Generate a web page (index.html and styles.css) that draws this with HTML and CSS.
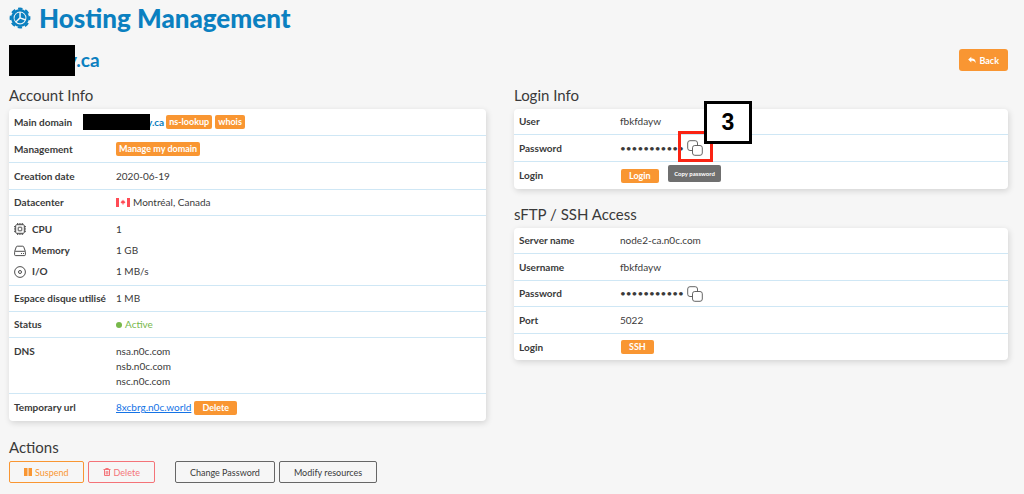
FILE: index.html
```html
<!DOCTYPE html>
<html lang="en">
<head>
<meta charset="utf-8">
<title>Hosting Management</title>
<link rel="stylesheet" href="styles.css">
</head>
<body>
<svg class="defs" aria-hidden="true">
  <symbol id="copy" viewBox="0 0 16 16"><g fill="none" stroke="currentColor" stroke-width=".9"><path d="M5.500 10.500H3A2.300 2.300 0 0 1 .7 8.200V3A2.300 2.300 0 0 1 3 .7h5.200A2.300 2.300 0 0 1 10.500 3v2.500"/><rect x="5.500" y="5.500" width="9.800" height="9.800" rx="2.300"/></g></symbol>
</svg>
<main class="page">
  <header class="title">
    <svg class="gear" viewBox="0 0 22 22" aria-hidden="true">
      <circle cx="11" cy="11" r="9.400" fill="none" stroke="currentColor" stroke-width="2" stroke-dasharray="4.400 2.983" stroke-dashoffset="2.200"/>
      <circle cx="11" cy="11" r="7.700" fill="none" stroke="currentColor" stroke-width="2.600"/>
      <path fill="currentColor" d="M10.300 5.600v5L6.700 14.200A5.300 5.300 0 0 1 10.300 5.600zM11.800 5.600a5.300 5.300 0 0 1 4.500 6.400l-4.500-1.500zM11.300 11.800l4.500 1.600a5.300 5.300 0 0 1-8.100 1.700z"/>
    </svg>
    <h1>Hosting Management</h1>
  </header>
  <div class="domain-bar">
    <h2 class="domain"><span class="mask mask-large"></span><span class="masked">y.ca</span></h2>
    <button class="back" type="button"><svg class="back-icon" viewBox="0 0 8 8" aria-hidden="true"><path fill="currentColor" d="M3.300.8v1.600c3 0 4.400 1.200 4.400 4.800C6.800 5.300 5.700 4.800 3.300 4.800v1.600L.2 3.600z"/></svg>Back</button>
  </div>
  <div class="columns">
    <section class="account">
      <h3>Account Info</h3>
      <table class="card">
        <tr class="tall"><th scope="row">Main domain</th><td><span class="line shifted"><span class="mask mask-small"></span><a class="masked" href="#">y.ca</a><button class="tag" type="button">ns-lookup</button><button class="tag" type="button">whois</button></span></td></tr>
        <tr class="tall"><th scope="row">Management</th><td><span class="line"><button class="tag" type="button">Manage my domain</button></span></td></tr>
        <tr class="tall"><th scope="row">Creation date</th><td>2020-06-19</td></tr>
        <tr><th scope="row">Datacenter</th><td><span class="line"><svg class="flag" viewBox="0 0 14 9" aria-hidden="true"><path fill="#fff" d="M0 0h14v9H0z"/><path fill="#ff4b55" d="M0 0h3v9H0zM11 0h3v9h-3zM7 1.500l.8 1.500.9-.3-.2 1.100 1.100.3-1.500 1.400H7.300v1.500h-.6V5.500H5.900L4.400 4.100l1.100-.3-.2-1.100.9.300z"/></svg>Montréal, Canada</span></td></tr>
        <tr class="res res-first"><th scope="row"><span class="label"><svg class="res-icon" viewBox="0 0 12 12" aria-hidden="true"><g fill="none" stroke="currentColor" stroke-width=".9"><rect x="1.700" y="1.700" width="8.600" height="8.600" rx="1"/><rect x="4.200" y="4.200" width="3.600" height="3.600" rx=".5"/><path d="M3.500 0v1.500M5.200 0v1.500M6.900 0v1.500M8.600 0v1.500M3.500 10.500V12M5.200 10.500V12M6.900 10.500V12M8.600 10.500V12M0 3.500h1.500M0 5.200h1.500M0 6.900h1.500M0 8.600h1.500M10.500 3.500H12M10.500 5.200H12M10.500 6.900H12M10.500 8.600H12" stroke-width=".8"/></g></svg>CPU</span></th><td>1</td></tr>
        <tr class="res"><th scope="row"><span class="label"><svg class="res-icon" viewBox="0 0 12 12" aria-hidden="true"><g fill="none" stroke="currentColor" stroke-width=".9"><path d="M.6 6.500 2.300 1.800q.3-.6.900-.6h5.600q.6 0 .9.600l1.700 4.700"/><rect x=".6" y="6.300" width="10.800" height="4.300" rx="1"/><path d="M7 8.500h1M9 8.500h1"/></g></svg>Memory</span></th><td>1 GB</td></tr>
        <tr class="res res-last"><th scope="row"><span class="label"><svg class="res-icon" viewBox="0 0 12 12" aria-hidden="true"><g fill="none" stroke="currentColor" stroke-width=".9"><circle cx="6" cy="6" r="5.400"/><circle cx="6" cy="6" r="1.500"/></g></svg>I/O</span></th><td>1 MB/s</td></tr>
        <tr><th scope="row">Espace disque utilisé</th><td>1 MB</td></tr>
        <tr><th scope="row">Status</th><td><span class="status">Active</span></td></tr>
        <tr class="dns"><th scope="row">DNS</th><td>nsa.n0c.com<br>nsb.n0c.com<br>nsc.n0c.com</td></tr>
        <tr class="tall"><th scope="row">Temporary url</th><td><span class="line"><a class="url" href="#">8xcbrg.n0c.world</a><button class="tag wide" type="button">Delete</button></span></td></tr>
      </table>
    </section>
    <div class="access">
      <section>
        <h3>Login Info</h3>
        <table class="card">
          <tr><th scope="row">User</th><td>fbkfdayw</td></tr>
          <tr class="tall"><th scope="row">Password</th><td><span class="line"><span class="dots">•••••••••••</span><span class="copy-wrap"><button class="copy" type="button" aria-label="Copy password" aria-describedby="tip"><svg viewBox="0 0 16 16" aria-hidden="true"><use href="#copy"/></svg></button><span class="highlight"></span><span class="step">3</span><span class="tooltip" id="tip" role="tooltip">Copy password</span></span></span></td></tr>
          <tr class="tall"><th scope="row">Login</th><td><span class="line inset"><button class="tag wide" type="button">Login</button></span></td></tr>
        </table>
      </section>
      <section>
        <h3>sFTP / SSH Access</h3>
        <table class="card">
          <tr><th scope="row">Server name</th><td>node2-ca.n0c.com</td></tr>
          <tr class="tall"><th scope="row">Username</th><td>fbkfdayw</td></tr>
          <tr><th scope="row">Password</th><td><span class="line"><span class="dots">•••••••••••</span><button class="copy" type="button" aria-label="Copy SSH password"><svg viewBox="0 0 16 16" aria-hidden="true"><use href="#copy"/></svg></button></span></td></tr>
          <tr class="tall"><th scope="row">Port</th><td>5022</td></tr>
          <tr><th scope="row">Login</th><td><span class="line inset"><button class="tag wide" type="button">SSH</button></span></td></tr>
        </table>
      </section>
    </div>
  </div>
  <section class="actions">
    <h3>Actions</h3>
    <div class="buttons">
      <button class="action suspend" type="button"><svg viewBox="0 0 8 8" aria-hidden="true"><path fill="currentColor" d="M0 0h3.500v8H0zM4.500 0H8v8H4.500z"/></svg>Suspend</button>
      <button class="action delete" type="button"><svg viewBox="0 0 8 8" aria-hidden="true"><path fill="none" stroke="currentColor" d="M.5 1.500h7M2.700 1.500V.5h2.600v1M1.500 2v5.500h5V2M3.200 3v3.500M4.800 3v3.500"/></svg>Delete</button>
      <button class="action spaced" type="button">Change Password</button>
      <button class="action" type="button">Modify resources</button>
    </div>
  </section>
</main>
</body>
</html>
```
FILE: styles.css
```css
* { box-sizing: border-box; }
body {
  margin: 0;
  background: #f6f6f6;
  color: #3a3a3a;
  font: 10px/15px Lato, "Open Sans", sans-serif;
}
button { font: inherit; cursor: pointer; }
h1, h2, h3 { margin: 0; }
.defs { position: absolute; width: 0; height: 0; }
.page { padding: 2px 16px 0 9px; }

.title { display: flex; align-items: center; gap: 8px; height: 32px; color: #0b80c0; }
.gear { width: 22px; height: 22px; }
h1 { font-size: 26px; line-height: 32px; font-weight: 900; }

.domain-bar { display: flex; justify-content: space-between; align-items: center; height: 32px; margin-top: 10px; }
.domain { display: flex; align-items: center; color: #0b80c0; font-size: 19px; line-height: 24px; font-weight: 700; }
.mask { position: relative; z-index: 1; background: #000; }
.mask-large { width: 66px; height: 31px; }
.domain .masked { margin-left: -8px; }
.back {
  display: flex; align-items: center; justify-content: center; gap: 3px;
  height: 22px; padding: 0 9px; border: 0; border-radius: 3px;
  background: #f99632; color: #fff; font-size: 9px; font-weight: 700;
}
.back-icon { width: 8px; height: 8px; }

h3 { font-size: 15px; line-height: 20px; font-weight: 400; }
.columns { display: grid; grid-template-columns: 477fr 494fr; gap: 28px; margin-top: 9px; }
.access { display: grid; gap: 15px; align-content: start; }
.card {
  width: 100%; margin-top: 4px; border-spacing: 0; table-layout: fixed;
  background: #fff; border-radius: 4px; box-shadow: 1px 2px 6px rgba(0, 0, 0, .14);
}
.card th, .card td { height: 26px; padding: 0; border-bottom: 1px solid #cfe7f5; vertical-align: middle; text-align: left; }
.card th { width: 106px; padding-left: 5px; font-weight: 700; white-space: nowrap; }
.account th { width: 107px; }
.card tr:last-child > * { border-bottom: 0; }
.card .tall > * { height: 27px; }
.card .res > * { height: 21px; border-bottom: 0; }
.card .res-first > * { height: 24px; padding-top: 2px; }
.card .res-last > * { height: 25px; padding-bottom: 3px; border-bottom: 1px solid #cfe7f5; }
.card .dns > * { height: 56px; vertical-align: top; padding-top: 6px; }

.line, .label { display: flex; align-items: center; }
.label { gap: 6px; }
.res-icon { width: 12px; height: 12px; }
.flag { width: 14px; height: 9px; margin-right: 3px; }
.shifted { margin-left: -33px; }
.mask-small { width: 67px; height: 16px; }
a.masked { margin: 0 2px 0 -3px; color: #0b80c0; font-weight: 700; text-decoration: none; }
.url { margin-right: 3px; color: #1473e6; text-decoration: underline; }
.tag {
  height: 14px; padding: 0 3px; border: 0; border-radius: 2px;
  background: #f99632; color: #fff; font-size: 9px; line-height: 14px; font-weight: 700;
}
.tag + .tag { margin-left: 3px; }
.wide { padding: 0 8px; }
.inset { padding-left: 1px; }
.status { display: flex; align-items: center; gap: 3px; color: #77b84a; }
.status::before { content: ""; width: 6px; height: 6px; border-radius: 50%; background: currentColor; }

.dots { width: 66px; }
.copy { display: block; width: 16px; height: 16px; margin-left: 1px; padding: 0; border: 0; background: none; color: #555; }
.copy svg { display: block; width: 16px; height: 16px; }
.copy-wrap { position: relative; }
.highlight { position: absolute; left: -8px; top: -9px; width: 35px; height: 31px; border: 3px solid #fa2313; pointer-events: none; }
.step {
  position: absolute; left: 18px; top: -39px; width: 48px; height: 43px; border: 3px solid #000;
  background: #fff; color: #000; font: 700 23px/37px "Liberation Sans", sans-serif; text-align: center;
}
.tooltip {
  position: absolute; left: -18px; top: 25px; width: 53px; height: 17px; border-radius: 2px;
  background: #6f6f6f; color: #fff; font-size: 6px; line-height: 17px; font-weight: 700; text-align: center; white-space: nowrap;
}

.actions { margin-top: 16px; }
.buttons { display: flex; gap: 4px; margin-top: 4px; }
.action {
  display: flex; align-items: center; gap: 3px; height: 22px; padding: 0 14px;
  border: 1px solid #666; border-radius: 2px; background: transparent; color: #3a3a3a; font-size: 9px;
}
.action svg { width: 8px; height: 8px; }
.suspend { border-color: #f99632; color: #f99632; }
.delete { border-color: #f47378; color: #f47378; }
.spaced { margin-left: 16px; }
```
